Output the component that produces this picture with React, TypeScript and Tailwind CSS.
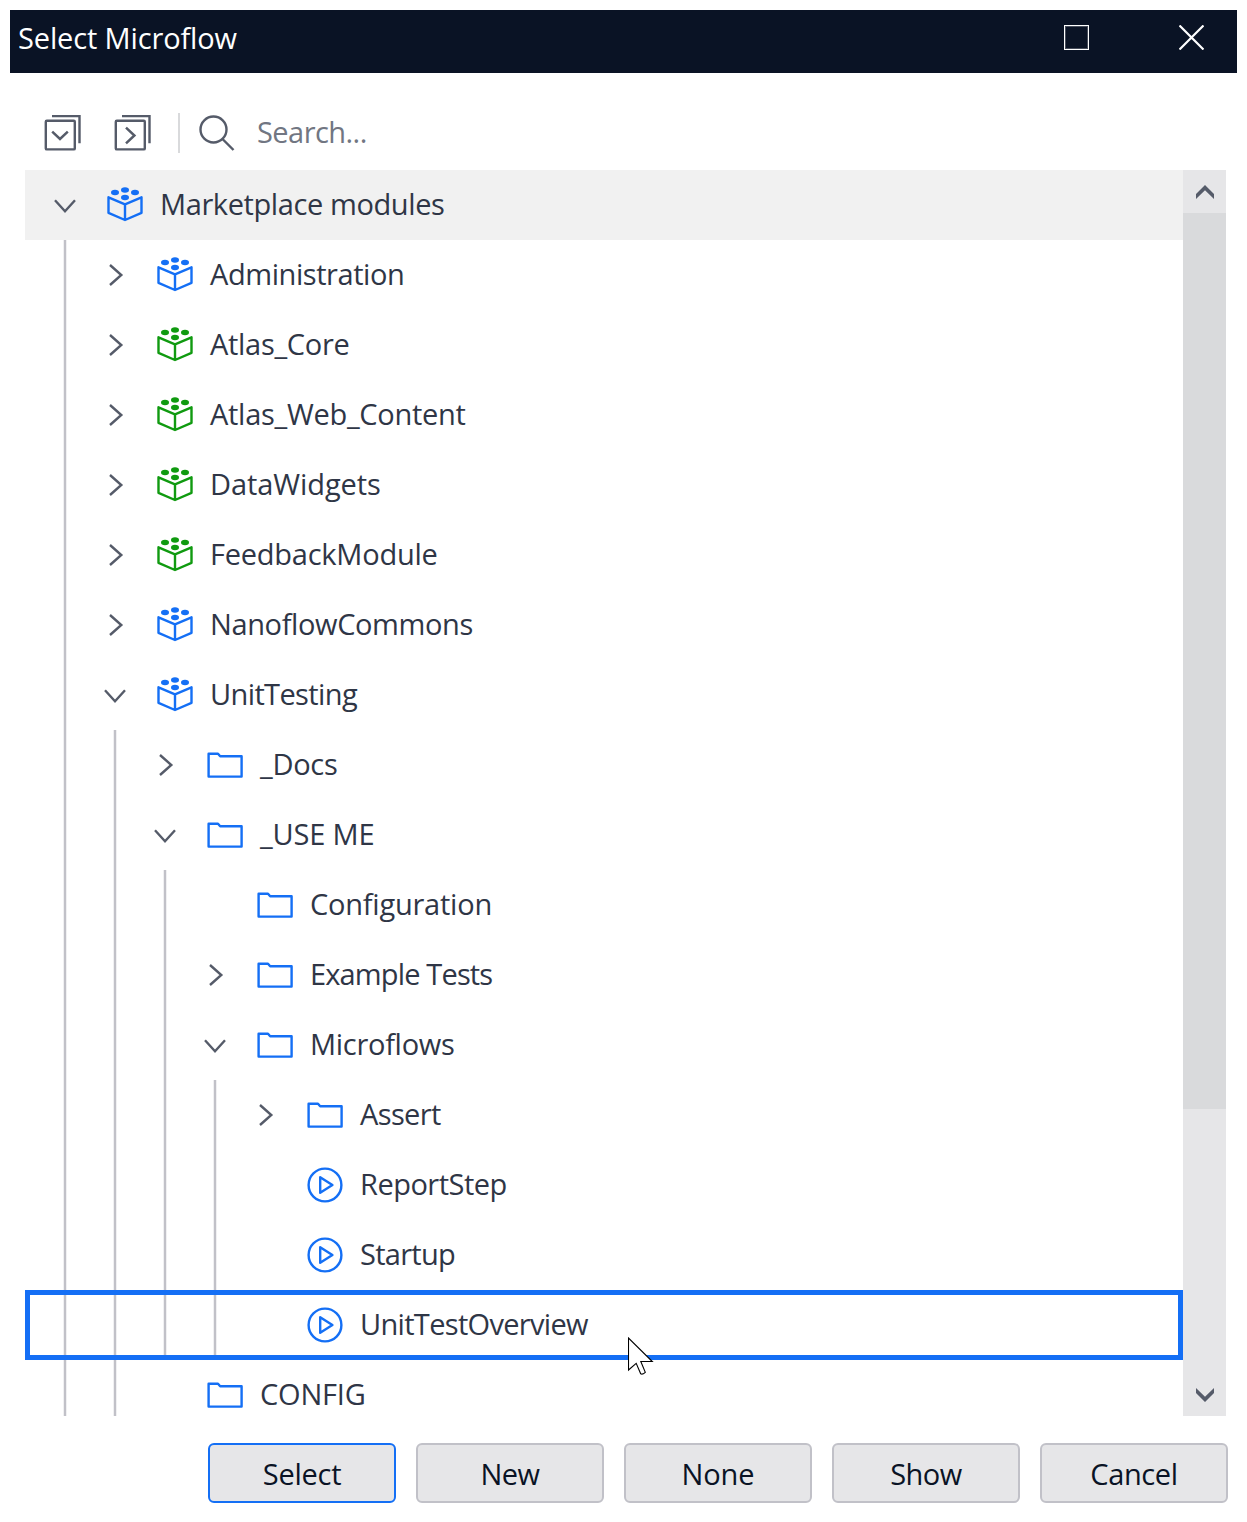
import React from "react";

type IconKind = "module-blue" | "module-green" | "folder" | "microflow";
type Row = {
  label: string;
  level: number;
  icon: IconKind;
  state?: "open" | "closed";
  tracking: string;
  highlighted?: boolean;
  selected?: boolean;
};

const rows: Row[] = [
  { label: "Marketplace modules", level: 0, icon: "module-blue", state: "open", tracking: "tracking-[-0.4px]", highlighted: true },
  { label: "Administration", level: 1, icon: "module-blue", state: "closed", tracking: "tracking-[-0.43px]" },
  { label: "Atlas_Core", level: 1, icon: "module-green", state: "closed", tracking: "tracking-[-0.3px]" },
  { label: "Atlas_Web_Content", level: 1, icon: "module-green", state: "closed", tracking: "tracking-[-0.28px]" },
  { label: "DataWidgets", level: 1, icon: "module-green", state: "closed", tracking: "tracking-[-0.08px]" },
  { label: "FeedbackModule", level: 1, icon: "module-green", state: "closed", tracking: "tracking-[-0.24px]" },
  { label: "NanoflowCommons", level: 1, icon: "module-blue", state: "closed", tracking: "tracking-[-0.38px]" },
  { label: "UnitTesting", level: 1, icon: "module-blue", state: "open", tracking: "tracking-[-0.62px]" },
  { label: "_Docs", level: 2, icon: "folder", state: "closed", tracking: "tracking-[-0.3px]" },
  { label: "_USE ME", level: 2, icon: "folder", state: "open", tracking: "tracking-[-0.17px]" },
  { label: "Configuration", level: 3, icon: "folder", tracking: "tracking-[-0.23px]" },
  { label: "Example Tests", level: 3, icon: "folder", state: "closed", tracking: "tracking-[-0.85px]" },
  { label: "Microflows", level: 3, icon: "folder", state: "open", tracking: "tracking-[-0.29px]" },
  { label: "Assert", level: 4, icon: "folder", state: "closed", tracking: "tracking-[-0.62px]" },
  { label: "ReportStep", level: 4, icon: "microflow", tracking: "tracking-[-0.5px]" },
  { label: "Startup", level: 4, icon: "microflow", tracking: "tracking-[-0.72px]" },
  { label: "UnitTestOverview", level: 4, icon: "microflow", tracking: "tracking-[-0.68px]", selected: true },
  { label: "CONFIG", level: 2, icon: "folder", tracking: "tracking-[-0.2px]" },
];

const buttons = [
  { label: "Select", tracking: "tracking-[-0.25px]", primary: true },
  { label: "New", tracking: "tracking-[-0.5px]" },
  { label: "None", tracking: "tracking-[-0.1px]" },
  { label: "Show", tracking: "tracking-[-0.5px]" },
  { label: "Cancel", tracking: "tracking-[-0.4px]" },
];

function Chevron({ open }: { open: boolean }) {
  return (
    <svg width="24" height="24" viewBox="0 0 24 24" fill="none" stroke="#555b69" strokeWidth="2.4">
      <path d={open ? "M2 7.2 12 18.2 22 7.2" : "M7 2 18.3 12 7 22"} />
    </svg>
  );
}

function ModuleIcon({ color }: { color: string }) {
  return (
    <svg width="36" height="36" viewBox="0 0 36 36" fill="none">
      <g fill={color}>
        <ellipse cx="18" cy="3" rx="4" ry="2.7" />
        <ellipse cx="8" cy="5.5" rx="4" ry="2.7" />
        <ellipse cx="28" cy="5.5" rx="4" ry="2.7" />
        <ellipse cx="18" cy="10.5" rx="4" ry="2.7" />
      </g>
      <path
        d="M1.5 10.3 18 17.3 34.5 10.3V25.8L18 33 1.5 25.8ZM18 17.3V33"
        stroke={color}
        strokeWidth="2.4"
        strokeLinejoin="round"
      />
    </svg>
  );
}

function NodeIcon({ kind }: { kind: IconKind }) {
  if (kind === "module-blue") return <ModuleIcon color="#146ff5" />;
  if (kind === "module-green") return <ModuleIcon color="#109a10" />;
  return (
    <svg width="36" height="36" viewBox="0 0 36 36" fill="none" stroke="#146ff5" strokeWidth="2.4" strokeLinejoin="round">
      {kind === "folder" ? (
        <path d="M1.6 6.7H11L13.2 9.3H34.6V29.6H1.6Z" />
      ) : (
        <>
          <circle cx="18" cy="18" r="16.4" />
          <path d="M13.2 10.2 25.4 18 13.2 25.8Z" />
        </>
      )}
    </svg>
  );
}

function TreeRow({ row }: { row: Row }) {
  return (
    <div className={`relative flex h-[70px] shrink-0 items-center pl-[15px] ${row.highlighted ? "bg-[#f1f1f1]" : ""}`}>
      {Array.from({ length: row.level }, (_, i) => (
        <span key={i} className="flex h-full w-[50px] shrink-0 justify-center">
          <span className="h-full w-[2px] bg-[#c1c1c8] shadow-[0_0_0_1px_#f0f0f2] [clip-path:inset(0_-1px)]" />
        </span>
      ))}
      <span className="flex w-[50px] shrink-0 justify-center">
        <span className="h-6 w-6">{row.state && <Chevron open={row.state === "open"} />}</span>
      </span>
      <span className="ml-[17px] h-9 w-9 shrink-0">
        <NodeIcon kind={row.icon} />
      </span>
      <span className={`mb-[2px] ml-[17px] whitespace-nowrap text-[29px] leading-[40px] text-[#2f3646] ${row.tracking}`}>{row.label}</span>
      {row.selected && <div className="absolute inset-0 border-[5px] border-[#146ff5]" />}
      {row.selected && (
        <svg className="absolute left-[603px] top-[47px] z-10" width="27" height="41" viewBox="0 0 27 41">
          <path
            d="M.5 1V33L8.2 26.3 12.7 36.8Q14.5 37.9 17.3 35.3L12.8 24.5H24.3Z"
            fill="white"
            stroke="black"
            strokeWidth="1.1"
          />
        </svg>
      )}
    </div>
  );
}

export default function App() {
  return (
    <div className="h-[1522px] w-[1247px] overflow-hidden bg-white p-[10px] font-['Open_Sans',sans-serif] [font-variant-ligatures:none]">
      <header className="flex h-[63px] items-start bg-[#0a1325] pl-2 text-white">
        <h1 className="mt-[8px] text-[29px] font-normal leading-[40px] tracking-[-0.14px]">Select Microflow</h1>
        <span className="ml-auto mr-[90px] mt-[15px] h-[25px] w-[25px] border border-white shadow-[inset_0_0_0_1px_#484e5c]" />
        <svg className="mr-[33px] mt-[15px]" width="25" height="25" viewBox="0 0 25 25" stroke="white" strokeWidth="2.2">
          <path d="M.5.5 24.5 24.5M24.5.5.5 24.5" />
        </svg>
      </header>

      <div className="flex h-[97px] items-center pl-[34px] pt-[22px]">
        <div className="flex gap-[33px]">
          {[true, false].map((down) => (
            <svg key={String(down)} width="37" height="36" viewBox="0 0 37 36" fill="none" stroke="#555b69" strokeWidth="2.4">
              <rect x="1.8" y="5.8" width="29" height="28.6" rx="1" />
              <path d="M8 1.1H35.5V28.3" />
              <path d={down ? "M8.2 16.7 16 24 23.8 16.7" : "M12 12.7 20.4 20.5 12 28.3"} strokeWidth="2.5" />
            </svg>
          ))}
        </div>
        <div className="ml-[27px] h-10 w-[2px] bg-[#d9dadc]" />
        <svg className="ml-[18px]" width="38" height="38" viewBox="0 0 38 38" fill="none" stroke="#555b69" strokeWidth="2.4">
          <circle cx="15.5" cy="15.5" r="13" />
          <path d="M24.5 25 35.5 36" />
        </svg>
        <span className="mb-[1px] ml-[21px] text-[29px] leading-[40px] tracking-[-0.55px] text-[#717682]">Search...</span>
      </div>

      <div className="ml-[15px] flex h-[1246px] w-[1201px]">
        <div className="flex w-[1158px] flex-col overflow-hidden">
          {rows.map((row) => (
            <TreeRow key={row.label} row={row} />
          ))}
        </div>
        <div className="flex w-[43px] flex-col bg-[#e6e6e8]">
          <div className="flex h-[43px] justify-center pt-[15px]">
            <svg width="18" height="14" viewBox="0 0 18 14" fill="#555b69">
              <path d="M0 9 9 0 18 9V14L9 5.2 0 14Z" />
            </svg>
          </div>
          <div className="h-[896px] bg-[#d9dadc]" />
          <div className="mt-auto flex h-[43px] justify-center pt-[15px]">
            <svg width="18" height="14" viewBox="0 0 18 14" fill="#555b69">
              <path d="M0 5 9 14 18 5V0L9 8.8 0 0Z" />
            </svg>
          </div>
        </div>
      </div>

      <footer className="ml-[198px] mt-[27px] flex gap-5">
        {buttons.map((b) => (
          <button
            key={b.label}
            className={`h-[60px] w-[188px] rounded-[6px] border-2 bg-[#e6e6e8] pt-[2px] text-[29px] leading-[40px] text-[#0a1325] ${b.tracking} ${
              b.primary ? "border-[#146ff5]" : "border-[#c1c1c8]"
            }`}
          >
            {b.label}
          </button>
        ))}
      </footer>
    </div>
  );
}
